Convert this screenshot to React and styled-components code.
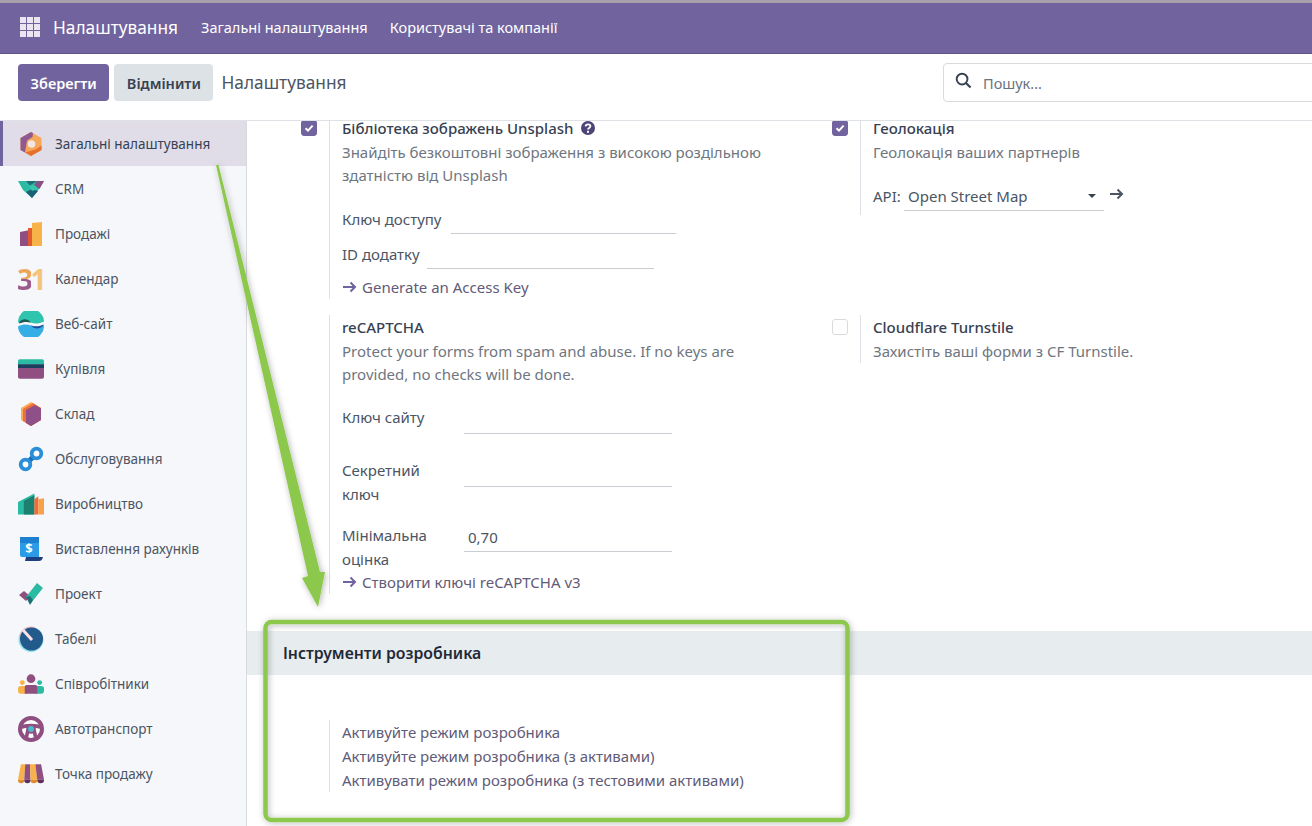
import React from "react";
import styled, { createGlobalStyle } from "styled-components";

const GlobalStyle = createGlobalStyle`
  html, body {
    margin: 0;
    height: 100%;
    overflow: hidden;
    background: #fff;
    font-family: "Noto Sans", "Open Sans", sans-serif;
    font-size: 15px;
    color: #374151;
  }
  * { box-sizing: border-box; }
`;

const Page = styled.div`
  position: relative;
  width: 1312px;
  height: 826px;
  overflow: hidden;
  display: flex;
  flex-direction: column;
`;
const NavBar = styled.header`
  height: 54px;
  flex: none;
  display: flex;
  align-items: center;
  padding: 3px 0 0 20px;
  background: #71639e;
  border-top: 3px solid #a8a1ad;
  border-bottom: 1px solid #5f5388;
  color: #fff;
`;
const AppsGrid = styled.div`
  width: 20px;
  height: 20px;
  display: grid;
  grid-template-columns: repeat(3, 6px);
  grid-auto-rows: 6px;
  gap: 1px;
  margin: -5px 13px 0 0;
  span {
    background: #e9e6f0;
  }
`;
const Brand = styled.div`
  font-size: 17.3px;
  margin-right: 23px;
  margin-top: -5px;
`;
const NavLink = styled.div`
  font-size: 14.5px;
  margin-right: 22px;
  margin-top: -5px;
`;
const ControlPanel = styled.div`
  height: 67px;
  flex: none;
  display: flex;
  align-items: center;
  padding: 0 0 9px 18px;
  border-bottom: 1px solid #dee2e6;
  background: #fff;
`;
const Button = styled.div`
  height: 37px;
  display: flex;
  align-items: center;
  padding: 0 12.5px;
  margin-right: 5px;
  border-radius: 4px;
  font-size: 14.5px;
  font-weight: 600;
  background: ${({ $primary }) => ($primary ? "#71639e" : "#dde2e7")};
  color: ${({ $primary }) => ($primary ? "#fff" : "#374151")};
`;
const PanelTitle = styled.div`
  font-size: 17.3px;
  margin-left: 3px;
  color: #4b5563;
`;
const SearchBox = styled.div`
  width: 420px;
  height: 39px;
  margin-left: auto;
  margin-right: -51px;
  display: flex;
  align-items: center;
  gap: 11px;
  padding-left: 11px;
  border: 1px solid #d8dadd;
  border-radius: 4px;
  font-size: 14.5px;
  color: #6b7280;
  svg {
    margin-top: -4px;
  }
`;
const Main = styled.div`
  flex: 1;
  min-height: 0;
  display: flex;
`;
const Sidebar = styled.nav`
  width: 247px;
  flex: none;
  background: #f6f7fa;
  border-right: 1px solid #d8dadd;
`;
const SideItem = styled.div`
  height: 45px;
  display: flex;
  align-items: center;
  padding-left: ${({ $active }) => ($active ? "15px" : "18px")};
  font-size: 13.5px;
  color: ${({ $active }) => ($active ? "#374151" : "#4b5563")};
  background: ${({ $active }) => ($active ? "#e0dde9" : "transparent")};
  border-left: ${({ $active }) => ($active ? "3px solid #71639e" : "none")};
`;
const IconSlot = styled.span`
  width: 26px;
  height: 26px;
  flex: none;
  margin-right: 11px;
  display: flex;
  align-items: center;
  justify-content: center;
`;
const CalendarGlyph = styled.span`
  font-size: 28px;
  line-height: 26px;
  font-weight: 700;
  letter-spacing: -2.5px;
  margin-left: -1px;
  white-space: nowrap;
`;
const CalendarThree = styled.span`
  background: linear-gradient(180deg, #eda65a 0 50%, #9b5a8c 50% 100%);
  -webkit-background-clip: text;
  background-clip: text;
  color: transparent;
`;
const CalendarOne = styled.span`
  color: #f3c57b;
`;
const Content = styled.main`
  flex: 1;
  min-width: 0;
  overflow: hidden;
`;
const Scrolled = styled.div`
  margin-top: -5px;
`;
const SettingsGrid = styled.div`
  display: grid;
  grid-template-columns: 531px 1fr;
  row-gap: 16px;
  align-items: start;
`;
const Setting = styled.section`
  display: flex;
  padding-left: 54px;
`;
const CheckCol = styled.div`
  width: 28px;
  flex: none;
  padding-top: 4px;
`;
const Check = styled.div`
  width: 16px;
  height: 16px;
  border-radius: 3px;
  display: flex;
  align-items: center;
  justify-content: center;
  background: ${({ $on }) => ($on ? "#71639e" : "#fff")};
  border: 1px solid ${({ $on }) => ($on ? "#71639e" : "#d8dadd")};
`;
const Body = styled.div`
  width: 438px;
  padding-left: 12px;
  border-left: 1px solid #dee2e6;
  line-height: 24px;
`;
const Title = styled.div`
  font-weight: 500;
  color: #374151;
  display: flex;
  align-items: center;
  gap: 8px;
`;
const Desc = styled.div`
  padding-top: 1px;
  line-height: 23px;
  color: #6f7680;
  width: 425px;
`;
const FieldRow = styled.div`
  display: flex;
  align-items: flex-start;
  margin-top: ${({ $mt }) => $mt}px;
`;
const FieldLabel = styled.div`
  flex: none;
  width: ${({ $w }) => $w}px;
  color: #4b5563;
`;
const Field = styled.div`
  width: ${({ $w }) => $w}px;
  height: ${({ $h }) => $h || 27}px;
  padding: 1px 0 0 4px;
  color: #4b5563;
  border-bottom: 1px solid #c9cdd2;
  line-height: 26px;
`;
const Select = styled(Field)`
  display: flex;
  align-items: center;
  justify-content: space-between;
  padding: 0 8px 2px 4px;
`;
const Caret = styled.span`
  width: 0;
  height: 0;
  border: 4px solid transparent;
  border-top-color: #374151;
  border-bottom: none;
`;
const ActionLink = styled.div`
  display: flex;
  align-items: center;
  gap: 5px;
  color: #5f5b78;
  margin-top: ${({ $mt }) => $mt}px;
`;
const ApiRow = styled.div`
  display: flex;
  align-items: flex-start;
  margin-top: 20px;
  padding-bottom: 4px;
  color: #4b5563;
`;
const ApiLabel = styled.div`
  width: 31px;
  flex: none;
`;
const GoArrow = styled.div`
  margin: -2px 0 0 5px;
  color: #4b5563;
`;
const SectionHeader = styled.h2`
  height: 44px;
  margin: 37px 0 45px;
  padding-left: 36px;
  display: flex;
  align-items: center;
  font-size: 15.8px;
  font-weight: 600;
  color: #1f2937;
  background: #e7ecee;
`;
const DevLinks = styled.div`
  margin-left: 82px;
  padding-left: 12px;
  border-left: 1px solid #dee2e6;
  line-height: 24px;
  color: #5f5b78;
`;
const Annotation = styled.svg`
  position: absolute;
  inset: 0;
  pointer-events: none;
`;

const Tick = () => (
  <svg width="10" height="10" viewBox="0 0 10 10">
    <path d="M1.5 5.2 4 7.6 8.6 2.6" fill="none" stroke="#fff" strokeWidth="2" />
  </svg>
);

const Arrow = ({ color = "#71639e" }) => (
  <svg width="15" height="12" viewBox="0 0 15 12">
    <path d="M1 6h12M8.5 1.5 13 6l-4.5 4.5" fill="none" stroke={color} strokeWidth="2" />
  </svg>
);

const icons = {
  settings: (
    <svg width="22" height="24" viewBox="0 0 22 24">
      <path d="M11 0 21.5 6V18L11 24 .5 18V6Z" fill="#f6a858" />
      <path d="M11 0 .5 6V18L5 20.5 7 8.5 12.5 5 13 1Z" fill="#8f5a8f" />
      <path d="M21.5 13.5V18L11 24 5 20.5 15.5 17.5Z" fill="#e8702f" />
      <circle cx="11.5" cy="12" r="3.8" fill="#f3e6e0" />
    </svg>
  ),
  crm: (
    <svg width="26" height="18" viewBox="0 0 26 18">
      <path d="M0 1H26L21 9 14 18 5 10Z" fill="#2bbba4" />
      <path d="M19 1H26L21.5 9 16 5Z" fill="#8a4f86" />
      <path d="M8 1H19L12 5.5Z" fill="#1d6f75" />
      <path d="M8 12 14 9 20 11 14 18Z" fill="#1d5f75" />
      <path d="M11 6 16 5 20 9 14 11Z" fill="#35c6ae" />
    </svg>
  ),
  sales: (
    <svg width="22" height="24" viewBox="0 0 22 24">
      <path d="M0 10 10 8V24H0Z" fill="#8f4f80" />
      <path d="M8 6H14V24H8Z" fill="#e2582f" />
      <path d="M12 1 22 0V24H12Z" fill="#f8b24a" />
      <path d="M10 8H12V24H10Z" fill="#e2582f" />
    </svg>
  ),
  calendar: (
    <CalendarGlyph>
      <CalendarThree>3</CalendarThree>
      <CalendarOne>1</CalendarOne>
    </CalendarGlyph>
  ),
  website: (
    <svg width="26" height="26" viewBox="0 0 26 26">
      <path d="M0 11.5A13 13 0 0 1 26 10.5C20 13 17 13 13 11.5 8 10 4 10 0 11.5Z" fill="#2fc4ae" />
      <path d="M1 11.5C4 7.5 9 7 13 11.5 8 10.5 5 11 1 12.5Z" fill="#1d5a57" />
      <path d="M0 15.5C5 13 8.5 13 13 14.5 18 16.5 22 16 26 14.5A13 13 0 0 1 0 15.5Z" fill="#35aee6" />
      <path d="M25.5 14.5C21 19 16 18 13 14.5 18 16 21 15.5 25.5 13.5Z" fill="#1c4e9b" />
    </svg>
  ),
  purchase: (
    <svg width="27" height="20" viewBox="0 0 27 20">
      <path d="M2 0H25a2 2 0 0 1 2 2V5H0V2a2 2 0 0 1 2-2Z" fill="#2bbba4" />
      <rect y="5" width="27" height="4" fill="#1d3f5f" />
      <path d="M0 9H27V18a2 2 0 0 1-2 2H2a2 2 0 0 1-2-2Z" fill="#8f4f80" />
    </svg>
  ),
  inventory: (
    <svg width="22" height="24" viewBox="0 0 22 24">
      <path d="M11 0 21 6V18L11 24 1 18V6Z" fill="#f8b05a" />
      <path d="M13 1 21 6V18L11 24 3 19V7Z" fill="#ef6f3c" />
      <path d="M15 3 21 6.5V18L11 24 6 21V8Z" fill="#8f4f88" />
    </svg>
  ),
  maintenance: (
    <svg width="26" height="26" viewBox="0 0 26 26">
      <path d="M8 18 18 8" stroke="#1c6db5" strokeWidth="5" />
      <circle cx="7.5" cy="18.5" r="4.8" fill="#fff" stroke="#2a8fd8" strokeWidth="3.8" />
      <circle cx="18.5" cy="7.5" r="4.8" fill="#fff" stroke="#2a8fd8" strokeWidth="3.8" />
    </svg>
  ),
  manufacturing: (
    <svg width="27" height="22" viewBox="0 0 27 22">
      <path d="M0 9 17 0V22H0Z" fill="#2bbba4" />
      <path d="M6 8 17 2V22H6Z" fill="#1d7f70" />
      <path d="M17 6 21 3V22H17Z" fill="#f26b3a" />
      <path d="M21 6 27 5V22H21Z" fill="#f8a04a" />
    </svg>
  ),
  invoicing: (
    <svg width="24" height="24" viewBox="0 0 24 24">
      <path d="M3 0H20V20H3a2 2 0 0 1-2-2V2a2 2 0 0 1 2-2Z" fill="#2a9be6" />
      <path d="M1 0H20V6H1Z" fill="#1c7fd0" />
      <path d="M7 20H24C23 23 22 24 20 24H6Z" fill="#1d3f7f" />
      <text x="10" y="16" fontSize="13" fontWeight="700" fill="#fff" textAnchor="middle" fontFamily="Noto Sans">$</text>
    </svg>
  ),
  project: (
    <svg width="24" height="22" viewBox="0 0 24 22">
      <path d="M0 12 5 8 11 13 7 18Z" fill="#8f4f80" />
      <path d="M7 14 18 0 24 5 12 20Z" fill="#2bbba4" />
      <path d="M7 14 11 13 14 17 11 22Z" fill="#1d6f75" />
    </svg>
  ),
  timesheet: (
    <svg width="26" height="26" viewBox="0 0 26 26">
      <circle cx="13" cy="13.5" r="12.5" fill="#8fdfee" />
      <path d="M1.5 9A12.5 12.5 0 0 1 17 1L12 14Z" fill="#ecb2c2" />
      <circle cx="13.5" cy="13" r="11.5" fill="#235a8c" />
      <path d="M5 4 14 14" stroke="#f6e2e6" strokeWidth="3" />
    </svg>
  ),
  employees: (
    <svg width="27" height="20" viewBox="0 0 27 20">
      <circle cx="13.5" cy="4.5" r="4.5" fill="#8f4f80" />
      <circle cx="4.5" cy="8.5" r="2.5" fill="#f8b24a" />
      <circle cx="22.5" cy="8.5" r="2.5" fill="#2bbba4" />
      <path d="M3 12H9V20H3a3 3 0 0 1-3-3V15a3 3 0 0 1 3-3Z" fill="#f8b24a" />
      <path d="M18 12H24a3 3 0 0 1 3 3V17a3 3 0 0 1-3 3H18Z" fill="#2bbba4" />
      <path d="M9 11H18a2 2 0 0 1 2 2V20H7V13a2 2 0 0 1 2-2Z" fill="#8f4f80" />
    </svg>
  ),
  fleet: (
    <svg width="26" height="26" viewBox="0 0 26 26">
      <circle cx="13" cy="13" r="11" fill="#fff" stroke="#8f4f80" strokeWidth="4" />
      <path d="M2 11.5C8 9 18 9 24 11.5M10 14 8 23M16 14 18 23" stroke="#8f4f80" strokeWidth="3.6" fill="none" />
      <circle cx="13" cy="13" r="4.8" fill="#8f4f80" />
      <circle cx="13" cy="13" r="3" fill="#4fb9c9" />
    </svg>
  ),
  pos: (
    <svg width="27" height="20" viewBox="0 0 27 20">
      <path d="M3 0H7.5L6.5 16H0Z" fill="#f8b24a" />
      <path d="M7.5 0H12.5L13 16H6.5Z" fill="#8f4f80" />
      <path d="M12.5 0H18L20 16H13Z" fill="#f8b24a" />
      <path d="M18 0H24L27 16H20Z" fill="#8f4f80" />
      <path d="M0 16H6.5V16.5a3.2 3 0 0 1-6.5 0ZM13 16H20V16.5a3.5 3 0 0 1-7 0Z" fill="#e08a2e" />
      <path d="M6.5 16H13V16.5a3.2 3 0 0 1-6.5 0ZM20 16H27V16.5a3.5 3 0 0 1-7 0Z" fill="#5f2f5a" />
    </svg>
  ),
};

const apps = [
  ["settings", "Загальні налаштування"],
  ["crm", "CRM"],
  ["sales", "Продажі"],
  ["calendar", "Календар"],
  ["website", "Веб-сайт"],
  ["purchase", "Купівля"],
  ["inventory", "Склад"],
  ["maintenance", "Обслуговування"],
  ["manufacturing", "Виробництво"],
  ["invoicing", "Виставлення рахунків"],
  ["project", "Проект"],
  ["timesheet", "Табелі"],
  ["employees", "Співробітники"],
  ["fleet", "Автотранспорт"],
  ["pos", "Точка продажу"],
];

export default function App() {
  return (
    <Page>
      <GlobalStyle />
      <NavBar>
        <AppsGrid>
          {Array.from({ length: 9 }, (_, i) => (
            <span key={i} />
          ))}
        </AppsGrid>
        <Brand>Налаштування</Brand>
        <NavLink>Загальні налаштування</NavLink>
        <NavLink>Користувачі та компанії</NavLink>
      </NavBar>
      <ControlPanel>
        <Button $primary>Зберегти</Button>
        <Button>Відмінити</Button>
        <PanelTitle>Налаштування</PanelTitle>
        <SearchBox>
          <svg width="17" height="17" viewBox="0 0 18 18">
            <circle cx="7.5" cy="7.5" r="5.7" fill="none" stroke="#374151" strokeWidth="2" />
            <path d="M11.6 11.6 16.5 16.5" stroke="#374151" strokeWidth="2.2" />
          </svg>
          Пошук...
        </SearchBox>
      </ControlPanel>
      <Main>
        <Sidebar>
          {apps.map(([icon, name], i) => (
            <SideItem key={icon} $active={i === 0}>
              <IconSlot>{icons[icon]}</IconSlot>
              {name}
            </SideItem>
          ))}
        </Sidebar>
        <Content>
          <Scrolled>
            <SettingsGrid>
              <Setting>
                <CheckCol>
                  <Check $on>
                    <Tick />
                  </Check>
                </CheckCol>
                <Body>
                  <Title>
                    Бібліотека зображень Unsplash
                    <svg width="14" height="14" viewBox="0 0 14 14">
                      <circle cx="7" cy="7" r="7" fill="#4d4478" />
                      <path d="M4.6 5.4C4.8 2.6 9.4 2.8 9.4 5.3 9.4 7 7 7 7 8.6" fill="none" stroke="#fff" strokeWidth="1.8" />
                      <rect x="6" y="9.8" width="2" height="2" fill="#fff" />
                    </svg>
                  </Title>
                  <Desc>Знайдіть безкоштовні зображення з високою роздільною здатністю від Unsplash</Desc>
                  <FieldRow $mt={20}>
                    <FieldLabel $w={109}>Ключ доступу</FieldLabel>
                    <Field $w={225} />
                  </FieldRow>
                  <FieldRow $mt={8}>
                    <FieldLabel $w={85}>ID додатку</FieldLabel>
                    <Field $w={227} />
                  </FieldRow>
                  <ActionLink $mt={6}>
                    <Arrow />
                    Generate an Access Key
                  </ActionLink>
                </Body>
              </Setting>
              <Setting>
                <CheckCol>
                  <Check $on>
                    <Tick />
                  </Check>
                </CheckCol>
                <Body>
                  <Title>Геолокація</Title>
                  <Desc>Геолокація ваших партнерів</Desc>
                  <ApiRow>
                    <ApiLabel>API:</ApiLabel>
                    <Select $w={200}>
                      Open Street Map
                      <Caret />
                    </Select>
                    <GoArrow>
                      <Arrow color="#4b5563" />
                    </GoArrow>
                  </ApiRow>
                </Body>
              </Setting>
              <Setting>
                <CheckCol />
                <Body>
                  <Title>reCAPTCHA</Title>
                  <Desc>Protect your forms from spam and abuse. If no keys are provided, no checks will be done.</Desc>
                  <FieldRow $mt={19}>
                    <FieldLabel $w={122}>Ключ сайту</FieldLabel>
                    <Field $w={208} $h={29} />
                  </FieldRow>
                  <FieldRow $mt={24}>
                    <FieldLabel $w={122}>
                      Секретний
                      <br />
                      ключ
                    </FieldLabel>
                    <Field $w={208} $h={29} />
                  </FieldRow>
                  <FieldRow $mt={17}>
                    <FieldLabel $w={122}>
                      Мінімальна
                      <br />
                      оцінка
                    </FieldLabel>
                    <Field $w={208} $h={29}>0,70</Field>
                  </FieldRow>
                  <ActionLink $mt={-1}>
                    <Arrow />
                    Створити ключі reCAPTCHA v3
                  </ActionLink>
                </Body>
              </Setting>
              <Setting>
                <CheckCol>
                  <Check />
                </CheckCol>
                <Body>
                  <Title>Cloudflare Turnstile</Title>
                  <Desc>Захистіть ваші форми з CF Turnstile.</Desc>
                </Body>
              </Setting>
            </SettingsGrid>
            <SectionHeader>Інструменти розробника</SectionHeader>
            <DevLinks>
              <div>Активуйте режим розробника</div>
              <div>Активуйте режим розробника (з активами)</div>
              <div>Активувати режим розробника (з тестовими активами)</div>
            </DevLinks>
          </Scrolled>
        </Content>
      </Main>
      <Annotation width="1312" height="826" viewBox="0 0 1312 826">
        <defs>
          <filter id="soft" x="-10%" y="-10%" width="120%" height="120%">
            <feDropShadow dx="1" dy="1" stdDeviation="3" floodColor="#000" floodOpacity="0.3" />
          </filter>
        </defs>
        <g filter="url(#soft)">
          <path d="M216 165 218.5 165 320 572 325 572 318 607 302 578 308 576Z" fill="#8cc84b" />
          <rect x="265.5" y="622" width="582" height="198" rx="6" fill="none" stroke="#8cc84b" strokeWidth="4.5" />
        </g>
      </Annotation>
    </Page>
  );
}
